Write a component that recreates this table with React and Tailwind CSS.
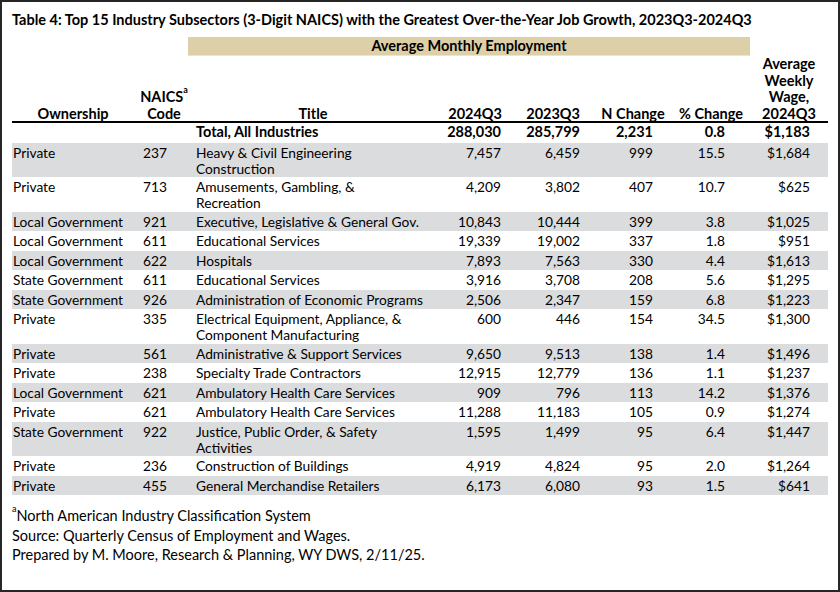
import React from 'react';

const rows = [
  { own: 'Private', code: '237', title: ['Heavy & Civil Engineering', 'Construction'], a: '7,457', b: '6,459', n: '999', p: '15.5', w: '$1,684' },
  { own: 'Private', code: '713', title: ['Amusements, Gambling, &', 'Recreation'], a: '4,209', b: '3,802', n: '407', p: '10.7', w: '$625' },
  { own: 'Local Government', code: '921', title: ['Executive, Legislative & General Gov.'], a: '10,843', b: '10,444', n: '399', p: '3.8', w: '$1,025' },
  { own: 'Local Government', code: '611', title: ['Educational Services'], a: '19,339', b: '19,002', n: '337', p: '1.8', w: '$951' },
  { own: 'Local Government', code: '622', title: ['Hospitals'], a: '7,893', b: '7,563', n: '330', p: '4.4', w: '$1,613' },
  { own: 'State Government', code: '611', title: ['Educational Services'], a: '3,916', b: '3,708', n: '208', p: '5.6', w: '$1,295' },
  { own: 'State Government', code: '926', title: ['Administration of Economic Programs'], a: '2,506', b: '2,347', n: '159', p: '6.8', w: '$1,223' },
  { own: 'Private', code: '335', title: ['Electrical Equipment, Appliance, &', 'Component Manufacturing'], a: '600', b: '446', n: '154', p: '34.5', w: '$1,300' },
  { own: 'Private', code: '561', title: ['Administrative & Support Services'], a: '9,650', b: '9,513', n: '138', p: '1.4', w: '$1,496' },
  { own: 'Private', code: '238', title: ['Specialty Trade Contractors'], a: '12,915', b: '12,779', n: '136', p: '1.1', w: '$1,237' },
  { own: 'Local Government', code: '621', title: ['Ambulatory Health Care Services'], a: '909', b: '796', n: '113', p: '14.2', w: '$1,376' },
  { own: 'Private', code: '621', title: ['Ambulatory Health Care Services'], a: '11,288', b: '11,183', n: '105', p: '0.9', w: '$1,274' },
  { own: 'State Government', code: '922', title: ['Justice, Public Order, & Safety', 'Activities'], a: '1,595', b: '1,499', n: '95', p: '6.4', w: '$1,447' },
  { own: 'Private', code: '236', title: ['Construction of Buildings'], a: '4,919', b: '4,824', n: '95', p: '2.0', w: '$1,264' },
  { own: 'Private', code: '455', title: ['General Merchandise Retailers'], a: '6,173', b: '6,080', n: '93', p: '1.5', w: '$641' },
];

const cols = 'grid grid-cols-[122px_58px_242px_74px_78px_86px_78px_78px]';

function Row({ r, shaded }) {
  const tall = r.title.length > 1;
  return (
    <div className={`${cols} ${tall ? 'h-[34.5px]' : 'h-[19.5px]'} ${shaded ? 'bg-[#dbdcde]' : ''} pt-[2px] leading-[16px] text-[13.75px] whitespace-nowrap`}>
      <div className="pl-[1px]">{r.own}</div>
      <div className="text-right pr-[25px]">{r.code}</div>
      <div className="pl-[4px]">
        {r.title.map((t) => (
          <div key={t}>{t}</div>
        ))}
      </div>
      <div className="text-right pr-[7px]">{r.a}</div>
      <div className="text-right pr-[6px]">{r.b}</div>
      <div className="text-right pr-[19px]">{r.n}</div>
      <div className="text-right pr-[25px]">{r.p}</div>
      <div className="text-right pr-[18px]">{r.w}</div>
    </div>
  );
}

export default function App() {
  return (
    <div className="w-[840px] h-[592px] bg-white border-2 border-[#262626] text-black text-[14.5px] font-['Lato','Liberation_Sans',sans-serif] overflow-hidden">
      <div className="px-[10px]">
        <div className="pt-[9px] h-[35px] font-bold leading-[18px] whitespace-nowrap">
          Table 4: Top 15 Industry Subsectors (3-Digit NAICS) with the Greatest Over-the-Year Job Growth, 2023Q3-2024Q3
        </div>
        <div className="ml-[176px] w-[562px] h-[19px] bg-[#ddd0a8] border-b border-[#ece4cc] text-center font-bold leading-[18px]">
          Average Monthly Employment
        </div>
        <div className={`${cols} h-[65px] items-end font-bold text-center leading-[16.7px] pb-[1px]`}>
          <div>Ownership</div>
          <div className="pl-[2px]">
            NAICS<sup className="text-[9px] align-[5px]">a</sup>
            <br />
            Code
          </div>
          <div>Title</div>
          <div className="text-right pr-[6px]">2024Q3</div>
          <div className="text-right pr-[6px]">2023Q3</div>
          <div className="pl-[8px]">N Change</div>
          <div>% Change</div>
          <div>
            Average
            <br />
            Weekly
            <br />
            Wage,
            <br />
            2024Q3
          </div>
        </div>
        <div className="w-[816px] h-[2px] bg-black" />
        <div className={`${cols} h-[19.5px] pt-[1px] leading-[16px] font-bold`}>
          <div />
          <div />
          <div className="pl-[4px]">Total, All Industries</div>
          <div className="text-right pr-[7px]">288,030</div>
          <div className="text-right pr-[6px]">285,799</div>
          <div className="text-right pr-[19px]">2,231</div>
          <div className="text-right pr-[25px]">0.8</div>
          <div className="text-right pr-[18px]">$1,183</div>
        </div>
        {rows.map((r, i) => (
          <Row key={r.code + r.own + i} r={r} shaded={i % 2 === 0} />
        ))}
        <div className="pt-[11px] leading-[19.5px]">
          <div>
            <sup className="text-[9px] align-[5px]">a</sup>North American Industry Classification System
          </div>
          <div>Source: Quarterly Census of Employment and Wages.</div>
          <div>Prepared by M. Moore, Research &amp; Planning, WY DWS, 2/11/25.</div>
        </div>
      </div>
    </div>
  );
}
